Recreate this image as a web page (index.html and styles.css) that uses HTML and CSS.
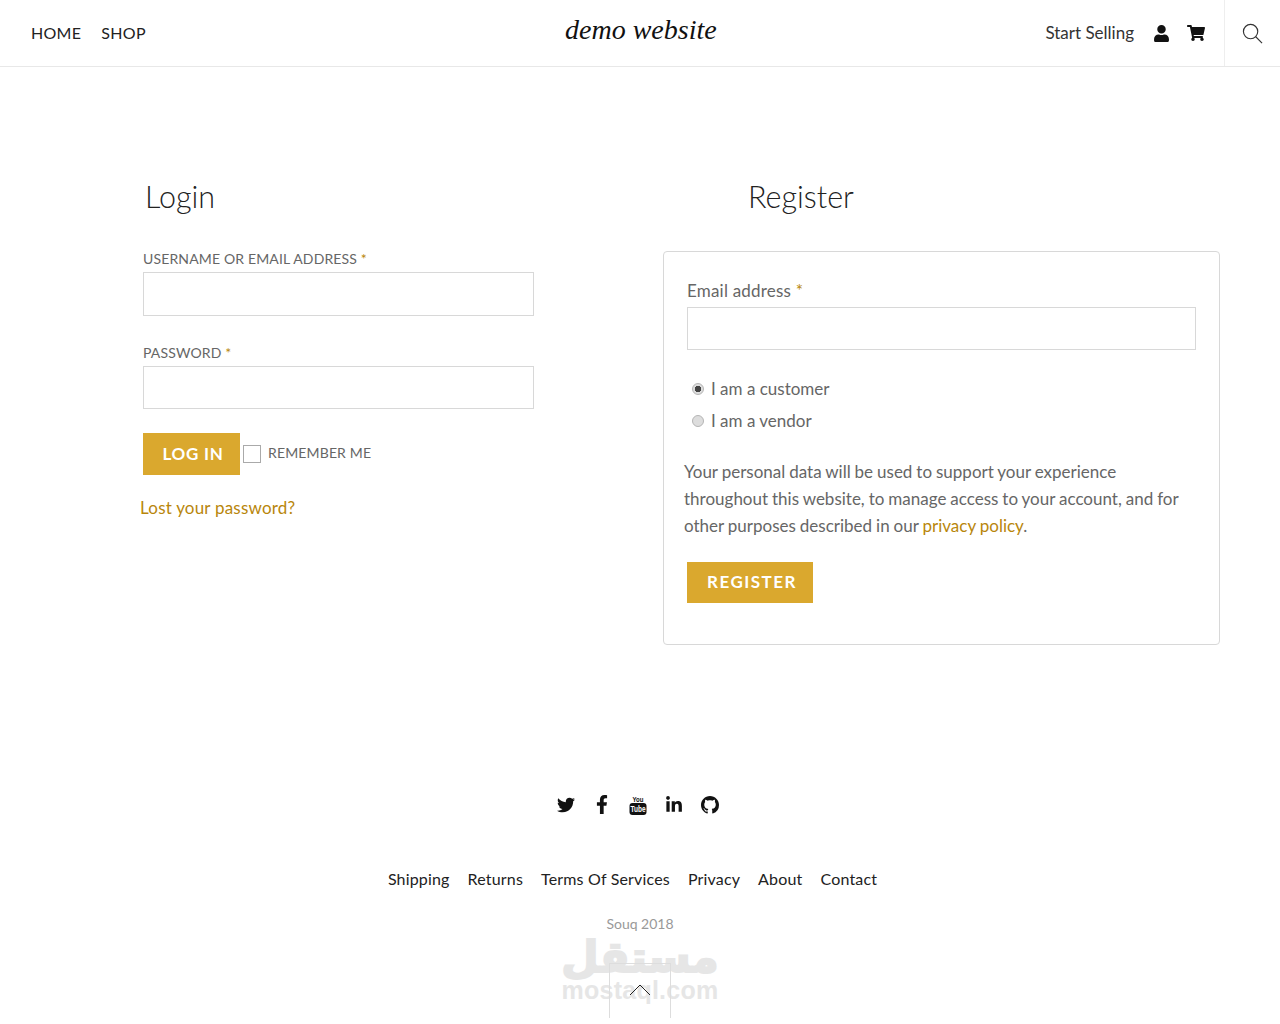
FILE: index.html
```html
<!DOCTYPE html>
<html lang="en">
<head>
    <meta charset="UTF-8">
    <meta name="viewport" content="width=device-width, initial-scale=1.0">
    <title>My account - demo website</title>
    <link rel="stylesheet" href="styles.css">
</head>
<body>
    <header class="site-header">
        <nav class="main-nav">
            <a href="#">HOME</a>
            <a href="#">SHOP</a>
        </nav>
        <a href="#" class="logo">demo website</a>
        <div class="header-right">
            <a href="#" class="start-selling">Start Selling</a>
            <a href="#" class="header-icon user-icon">
                <svg viewBox="0 0 448 512"><path d="M224 256c70.7 0 128-57.3 128-128S294.7 0 224 0 96 57.3 96 128s57.3 128 128 128zm89.6 32h-16.7c-22.2 10.2-46.9 16-72.9 16s-50.6-5.8-72.9-16h-16.7C60.2 288 0 348.2 0 422.4V464c0 26.5 21.5 48 48 48h352c26.5 0 48-21.5 48-48v-41.6c0-74.2-60.2-134.4-134.4-134.4z"/></svg>
            </a>
            <a href="#" class="header-icon cart-icon">
                <svg viewBox="0 0 576 512"><path d="M528.12 301.319l47.273-208C578.806 78.301 567.391 64 551.99 64H159.208l-9.166-44.81C147.758 8.021 137.93 0 126.529 0H24C10.745 0 0 10.745 0 24v16c0 13.255 10.745 24 24 24h69.883l70.248 343.435C147.325 417.1 136 435.222 136 456c0 30.928 25.072 56 56 56s56-25.072 56-56c0-15.674-6.447-29.835-16.824-40h209.647C430.447 426.165 424 440.326 424 456c0 30.928 25.072 56 56 56s56-25.072 56-56c0-22.172-12.888-41.332-31.579-50.405l5.517-24.276c3.413-15.018-8.002-29.319-23.403-29.319H218.117l-6.545-32h293.145c11.206 0 20.92-7.754 23.403-18.681z"/></svg>
            </a>
            <a href="#" class="search-toggle">
                <svg viewBox="0 0 22 22" class="search-icon"><circle cx="9" cy="9" r="7.5"/><line x1="14.4" y1="14.4" x2="21" y2="21"/></svg>
            </a>
        </div>
    </header>

    <main class="account-page">
        <section class="login-col">
            <h2 class="login-title">Login</h2>
            <form>
                <label class="field-label">USERNAME OR EMAIL ADDRESS <span class="req">*</span></label>
                <input type="text" class="text-input">
                <label class="field-label password-label">PASSWORD <span class="req">*</span></label>
                <input type="password" class="text-input password-input">
                <div class="login-row">
                    <button type="button" class="gold-btn login-btn">LOG IN</button>
                    <span class="checkbox-box"></span>
                    <span class="remember">REMEMBER ME</span>
                </div>
                <a href="#" class="lost-link">Lost your password?</a>
            </form>
        </section>

        <section class="register-col">
            <h2 class="register-title">Register</h2>
            <form class="register-card">
                <label class="email-label">Email address <span class="req">*</span></label>
                <input type="email" class="text-input register-input">
                <label class="radio-row first-radio"><input type="radio" name="role" checked> I am a customer</label>
                <label class="radio-row"><input type="radio" name="role"> I am a vendor</label>
                <p class="privacy-text">Your personal data will be used to support your experience throughout this website, to manage access to your account, and for other purposes described in our <a href="#">privacy policy</a>.</p>
                <button type="button" class="gold-btn register-btn">REGISTER</button>
            </form>
        </section>
    </main>

    <footer class="site-footer">
        <div class="social-icons">
            <a href="#"><svg viewBox="0 0 512 512" class="icon-twitter"><path d="M459.37 151.716c.325 4.548.325 9.097.325 13.645 0 138.72-105.583 298.558-298.558 298.558-59.452 0-114.68-17.219-161.137-47.106 8.447.974 16.568 1.299 25.34 1.299 49.055 0 94.213-16.568 130.274-44.832-46.132-.975-84.792-31.188-98.112-72.772 6.498.974 12.995 1.624 19.818 1.624 9.421 0 18.843-1.3 27.614-3.573-48.081-9.747-84.143-51.98-84.143-102.985v-1.299c13.969 7.797 30.214 12.67 47.431 13.319-28.264-18.843-46.781-51.005-46.781-87.391 0-19.492 5.197-37.36 14.294-52.954 51.655 63.675 129.3 105.258 216.365 109.807-1.624-7.797-2.599-15.918-2.599-24.04 0-57.828 46.782-104.934 104.934-104.934 30.213 0 57.502 12.67 76.67 33.137 23.715-4.548 46.456-13.32 66.599-25.34-7.798 24.366-24.366 44.833-46.132 57.827 21.117-2.273 41.584-8.122 60.426-16.243-14.292 20.791-32.161 39.308-52.628 54.253z"/></svg></a>
            <a href="#"><svg viewBox="0 0 320 512" class="icon-facebook"><path d="M279.14 288l14.22-92.66h-88.91v-60.13c0-25.35 12.42-50.06 52.24-50.06h40.42V6.26S260.43 0 225.36 0c-73.22 0-121.08 44.38-121.08 124.72v70.62H22.89V288h81.39v224h100.17V288z"/></svg></a>
            <a href="#"><svg viewBox="0 0 18 20" class="icon-youtube"><text x="9" y="6.6" textLength="11" lengthAdjust="spacingAndGlyphs" class="yt-you">You</text><rect x="0.5" y="8" width="17" height="12" rx="3"/><text x="9" y="17.4" textLength="15" lengthAdjust="spacingAndGlyphs" class="yt-tube">Tube</text></svg></a>
            <a href="#"><svg viewBox="0 0 448 512" class="icon-linkedin"><path d="M100.28 448H7.4V148.9h92.88zM53.79 108.1C24.09 108.1 0 83.5 0 53.8a53.79 53.79 0 0 1 107.58 0c0 29.7-24.1 54.3-53.79 54.3zM447.9 448h-92.68V302.4c0-34.7-.7-79.2-48.29-79.2-48.29 0-55.69 37.7-55.69 76.7V448h-92.78V148.9h89.08v40.8h1.3c12.4-23.5 42.69-48.3 87.88-48.3 94 0 111.28 61.9 111.28 142.3V448z"/></svg></a>
            <a href="#"><svg viewBox="0 0 16 16" class="icon-github"><path d="M8 0C3.58 0 0 3.58 0 8c0 3.54 2.29 6.53 5.47 7.59.4.07.55-.17.55-.38 0-.19-.01-.82-.01-1.49-2.01.37-2.53-.49-2.69-.94-.09-.23-.48-.94-.82-1.13-.28-.15-.68-.52-.01-.53.63-.01 1.08.58 1.23.82.72 1.21 1.87.87 2.33.66.07-.52.28-.87.51-1.07-1.78-.2-3.64-.89-3.64-3.95 0-.87.31-1.59.82-2.15-.08-.2-.36-1.02.08-2.12 0 0 .67-.21 2.2.82.64-.18 1.32-.27 2-.27.68 0 1.36.09 2 .27 1.53-1.04 2.2-.82 2.2-.82.44 1.1.16 1.92.08 2.12.51.56.82 1.27.82 2.15 0 3.07-1.87 3.75-3.65 3.95.29.25.54.73.54 1.48 0 1.07-.01 1.93-.01 2.2 0 .21.15.46.55.38A8.013 8.013 0 0016 8c0-4.42-3.58-8-8-8z"/></svg></a>
        </div>
        <nav class="footer-links">
            <a href="#">Shipping</a>
            <a href="#">Returns</a>
            <a href="#">Terms Of Services</a>
            <a href="#">Privacy</a>
            <a href="#">About</a>
            <a href="#">Contact</a>
        </nav>
        <div class="copyright">Souq 2018</div>

        <div class="watermark">
            <div class="watermark-ar" lang="ar" dir="rtl">مستقل</div>
            <div class="watermark-en">mostaql.com</div>
        </div>
        <a href="#" class="to-top">
            <svg viewBox="0 0 22 12"><polyline points="1,11 11,1 21,11"/></svg>
        </a>
    </footer>
</body>
</html>
```

FILE: styles.css
```css
* {
    box-sizing: border-box;
    margin: 0;
    padding: 0;
}
body {
    background: white;
    color: #666;
    font-family: 'Lato', 'Liberation Sans', sans-serif;
    font-size: 16px;
    height: 1024px;
    overflow: hidden;
}
a {
    color: inherit;
    text-decoration: none;
}

/* header */
.site-header {
    height: 67px;
    border-bottom: 1px solid #e8e8e8;
    display: flex;
    align-items: stretch;
    justify-content: space-between;
    position: relative;
}
.main-nav {
    display: flex;
    align-items: center;
    gap: 20px;
    padding-left: 31px;
    padding-bottom: 2px;
    font-size: 16px;
    letter-spacing: 0.3px;
    color: #222;
}
.logo {
    position: absolute;
    left: 565px;
    top: 12px;
    font-family: 'Liberation Serif', serif;
    font-style: italic;
    font-size: 28px;
    line-height: 36px;
    color: #111;
}
.header-right {
    display: flex;
    align-items: center;
}
.start-selling {
    font-size: 17px;
    color: #333;
    margin-right: 20px;
    padding-bottom: 2px;
}
.header-icon {
    display: flex;
    fill: #111;
}
.user-icon svg {
    width: 15px;
    height: 17px;
}
.user-icon {
    margin-right: 18px;
}
.cart-icon svg {
    width: 18px;
    height: 16px;
}
.cart-icon {
    margin-right: 19px;
}
.search-toggle {
    width: 56px;
    height: 66px;
    border-left: 1px solid #eee;
    display: flex;
    align-items: center;
    justify-content: center;
}
.search-icon {
    width: 21px;
    height: 21px;
    fill: none;
    stroke: #333;
    stroke-width: 1.2;
}

/* login + register */
.account-page {
    display: flex;
    padding: 111px 60px 0 143px;
    height: 698px;
}
.login-col {
    width: 391px;
    margin-right: 129px;
}
.register-col {
    width: 557px;
}
.login-title,
.register-title {
    font-size: 30.5px;
    font-weight: 300;
    line-height: 36px;
    color: #222;
    margin-bottom: 36px;
}
.login-title {
    padding-left: 2px;
}
.register-title {
    padding-left: 85px;
    margin-bottom: 37px;
}
.field-label {
    display: block;
    font-size: 14px;
    letter-spacing: 0.15px;
    line-height: 18px;
    margin-bottom: 4px;
}
.password-label {
    margin-top: 28px;
}
.req {
    color: #b8860b;
}
.text-input {
    display: block;
    width: 100%;
    height: 44px;
    border: 1px solid #d8d8d8;
    background: white;
}
.password-input {
    height: 43px;
}
.login-row {
    display: flex;
    align-items: center;
    margin-top: 24px;
}
.gold-btn {
    background: #daa82e;
    color: white;
    border: none;
    font-family: inherit;
    font-size: 17px;
    font-weight: 700;
    letter-spacing: 1.2px;
}
.login-btn {
    width: 97px;
    height: 42px;
    padding-left: 3px;
    padding-bottom: 2px;
    letter-spacing: 0.7px;
}
.checkbox-box {
    width: 18px;
    height: 18px;
    border: 1px solid #aaa;
    margin-left: 3px;
    margin-right: 7px;
}
.remember {
    font-size: 14px;
    letter-spacing: 0.15px;
    padding-bottom: 3px;
}
.lost-link {
    display: block;
    margin-top: 22px;
    margin-left: -3px;
    font-size: 17px;
    letter-spacing: 0.2px;
    color: #b8860b;
}
.register-card {
    border: 1px solid #d8d8d8;
    border-radius: 4px;
    height: 394px;
    padding: 28px 23px 0 23px;
}
.email-label {
    display: block;
    font-size: 17px;
    line-height: 21px;
    letter-spacing: 0.2px;
    margin-bottom: 6px;
}
.register-input {
    height: 43px;
    margin-bottom: 28px;
}
.radio-row {
    display: flex;
    align-items: center;
    gap: 7px;
    padding-left: 5px;
    font-size: 17px;
    line-height: 22px;
    margin-top: 10px;
}
.first-radio {
    margin-top: 0;
}
.radio-row input {
    appearance: none;
    width: 12px;
    height: 12px;
    border-radius: 50%;
    border: 1px solid #b5b5b5;
    background: #ddd;
}
.radio-row input:checked {
    background: radial-gradient(circle, #444 0 3px, #ddd 3.5px);
}
.privacy-text {
    margin: 26px 0 23px -3px;
    font-size: 17px;
    line-height: 27px;
    word-spacing: -0.4px;
}
.privacy-text a {
    color: #b8860b;
}
.register-btn {
    width: 126px;
    height: 41px;
    padding-left: 4px;
    padding-bottom: 2px;
    letter-spacing: 1.5px;
}

/* footer */
.site-footer {
    position: relative;
    text-align: center;
}
.social-icons {
    display: flex;
    align-items: center;
    justify-content: center;
    gap: 18px;
    height: 24px;
    margin-top: 28px;
    padding-right: 5px;
    fill: #111;
}
.social-icons a {
    display: flex;
    width: 18px;
    height: 24px;
    align-items: center;
    justify-content: center;
}
.social-icons svg {
    overflow: visible;
}
.icon-twitter {
    width: 18px;
    height: 18px;
}
.icon-facebook {
    width: 12px;
    height: 19px;
    margin-bottom: 2px;
}
.icon-youtube {
    width: 18px;
    height: 20px;
}
.icon-linkedin {
    width: 18px;
    height: 18px;
}
.icon-github {
    width: 18px;
    height: 18px;
}
.yt-you,
.yt-tube {
    font-family: 'Liberation Sans', sans-serif;
    font-weight: 700;
    text-anchor: middle;
}
.yt-you {
    font-size: 8px;
    fill: #111;
}
.yt-tube {
    font-size: 9px;
    fill: white;
}
.footer-links {
    display: flex;
    justify-content: center;
    gap: 18px;
    margin-top: 52px;
    padding-right: 15px;
    font-size: 16px;
    line-height: 20px;
    letter-spacing: 0.17px;
    color: #222;
}
.copyright {
    margin-top: 26px;
    font-size: 14px;
    line-height: 18px;
    color: #999;
}
.watermark {
    position: absolute;
    left: 0;
    right: 0;
    top: 141px;
    text-align: center;
    color: #e6e6e6;
    pointer-events: none;
}
.watermark-ar {
    font-family: 'DejaVu Sans', sans-serif;
    font-weight: 700;
    font-size: 43px;
    line-height: 46px;
    -webkit-text-stroke: 2px #e6e6e6;
}
.watermark-en {
    font-family: 'Liberation Sans', sans-serif;
    font-weight: 700;
    font-size: 25px;
    line-height: 26px;
    letter-spacing: 0.25px;
    margin-top: -3px;
}
.to-top {
    position: absolute;
    left: 609px;
    top: 170px;
    width: 62px;
    height: 55px;
    border: 1px solid #ddd;
    border-bottom: none;
    display: flex;
    justify-content: center;
    padding-top: 20px;
}
.to-top svg {
    width: 22px;
    height: 12px;
    fill: none;
    stroke: #222;
    stroke-width: 1;
}
```
